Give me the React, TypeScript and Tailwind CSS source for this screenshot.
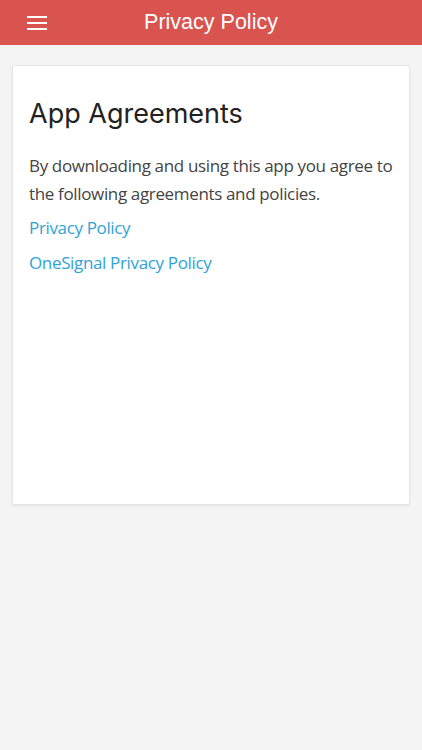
import React from "react";

export default function App() {
  return (
    <div className="min-h-[750px] w-full bg-[#f4f4f4]" style={{ fontFamily: '"Open Sans", sans-serif' }}>
      <header className="relative flex h-[45px] items-center justify-center bg-[#d9534f]">
        <button className="absolute left-[27px] top-[16px] flex w-[20px] flex-col gap-[4px]">
          <span className="block h-[2px] w-full bg-white" />
          <span className="block h-[2px] w-full bg-white" />
          <span className="block h-[2px] w-full bg-white" />
        </button>
        <h1 className="text-[21.5px] font-normal text-white" style={{ fontFamily: '"Liberation Sans", Arial, sans-serif' }}>
          Privacy Policy
        </h1>
      </header>
      <div className="px-[12px] pt-[20px]">
        <div className="h-[440px] rounded-[2px] border border-[#e6e6e6] bg-white px-[16px] pt-[30px] shadow-[0_1px_2px_rgba(0,0,0,0.08)]">
          <h2 className="text-[27px] leading-[36px] font-normal text-[#222]" style={{ fontFamily: '"Inter", sans-serif' }}>
            App Agreements
          </h2>
          <p className="mt-[20px] text-[17px] leading-[28px] tracking-[-0.35px] text-[#444]">
            By downloading and using this app you agree to the following agreements and policies.
          </p>
          <p className="mt-[6px] text-[17px] leading-[28px] tracking-[-0.35px] text-[#2ea3d8]">Privacy Policy</p>
          <p className="mt-[7px] text-[17px] leading-[28px] tracking-[-0.35px] text-[#2ea3d8]">OneSignal Privacy Policy</p>
        </div>
      </div>
    </div>
  );
}
